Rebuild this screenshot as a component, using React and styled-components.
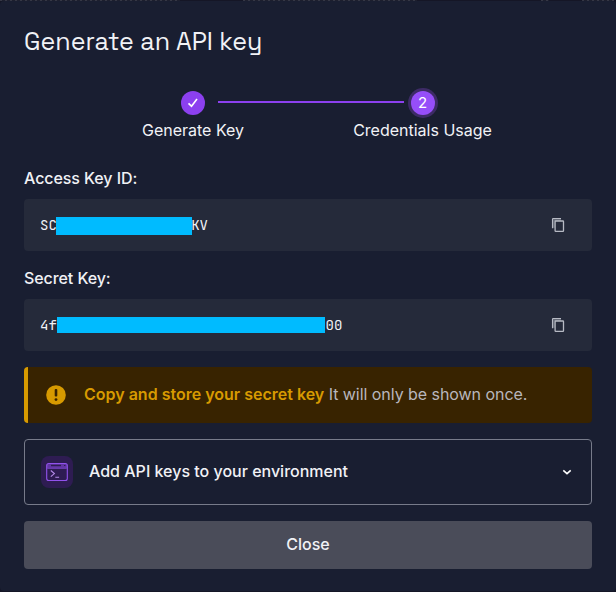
import React from "react";
import styled, { createGlobalStyle } from "styled-components";

const Global = createGlobalStyle`
  * { box-sizing: border-box; }
  body { margin: 0; background: #151626; }
`;

const Backdrop = styled.div`
  height: 592px;
  background: #151626;
  overflow: hidden;
`;

const PageBehind = styled.div`
  display: flex;
  height: 1px;
`;

const Dashes = styled.span`
  width: ${(p) => p.$width}px;
  margin-left: ${(p) => p.$offset}px;
  background: repeating-linear-gradient(90deg, #353745 0 2px, #1d1f2e 2px 5px);
`;

const Modal = styled.main`
  height: 590px;
  padding: 23px 24px 0;
  border-radius: 4px;
  background: #191e31;
  color: #f1f2f6;
  font: 400 16px/24px Inter, sans-serif;
`;

const Title = styled.h1`
  margin: 0;
  padding-top: 1px;
  height: 32px;
  font: 400 25px/32px "Space Grotesk", Inter, sans-serif;
  white-space: nowrap;
`;

const Stepper = styled.div`
  display: flex;
  justify-content: center;
  margin-top: 32px;
  padding-left: 18px;
  height: 56px;
`;

const Step = styled.div`
  display: flex;
  flex-direction: column;
  align-items: center;
  gap: 3px;
  width: ${(p) => p.$width}px;
  white-space: nowrap;
`;

const StepCircle = styled.div`
  display: grid;
  place-items: center;
  width: 24px;
  height: 24px;
  margin-top: 3px;
  border-radius: 50%;
  background: ${(p) => (p.$active ? "#964ef9" : "#8c40ef")};
  box-shadow: ${(p) => (p.$active ? "0 0 0 3px #3d2b66" : "none")};
  color: #fff;
  font-size: 15px;
  line-height: 24px;
`;

const StepLine = styled.div`
  width: 186px;
  height: 2px;
  margin: 13px -51px 0 -26px;
  background: #8c40ef;
`;

const Label = styled.h2`
  margin: ${(p) => p.$top}px 0 9px;
  font-size: 16px;
  font-weight: 500;
  line-height: 24px;
  letter-spacing: -0.08px;
`;

const KeyField = styled.div`
  display: flex;
  align-items: center;
  justify-content: space-between;
  height: 52px;
  padding: 0 26px 0 16px;
  border-radius: 4px;
  background: #252a3a;
`;

const KeyValue = styled.div`
  display: flex;
  align-items: center;
  font: 400 14px/20px "JetBrains Mono", "Liberation Mono", monospace;
`;

const Redaction = styled.span`
  width: ${(p) => p.$width}px;
  height: ${(p) => p.$height}px;
  margin: ${(p) => p.$margin};
  background: #00bbff;
`;

const Alert = styled.section`
  display: flex;
  align-items: center;
  gap: 18px;
  height: 56px;
  margin-top: 16px;
  padding-left: 18px;
  border-left: 4px solid #d79a00;
  border-radius: 4px;
  background: #382300;
  color: #b8b7bd;
  white-space: nowrap;
`;

const AlertText = styled.p`
  margin: 0;
  padding-bottom: 2px;
  letter-spacing: -0.05px;
`;

const Strong = styled.strong`
  color: #d79a00;
  font-weight: 600;
  letter-spacing: 0;
`;

const Expander = styled.section`
  display: flex;
  align-items: center;
  gap: 16px;
  height: 66px;
  margin-top: 16px;
  padding: 0 16px;
  border: 1px solid #777b8a;
  border-radius: 4px;
  font-weight: 500;
`;

const IconTile = styled.div`
  display: grid;
  place-items: center;
  width: 32px;
  height: 32px;
  border-radius: 8px;
  background: #2e1c52;
`;

const ExpanderTitle = styled.span`
  flex: 1;
  padding-bottom: 2px;
`;

const CloseButton = styled.button`
  display: block;
  width: 100%;
  height: 48px;
  margin-top: 16px;
  padding: 0 0 2px;
  border: 0;
  border-radius: 4px;
  background: #4a4c59;
  color: #f1f2f6;
  font: 500 16px/24px Inter, sans-serif;
`;

const CopyIcon = () => (
  <svg width="16" height="16" viewBox="0 0 16 16" fill="none" stroke="#b7bac4" strokeWidth="1.3">
    <path d="M2.6 11.2V2.2q0-.6.6-.6H11" />
    <path d="M3.2 2.2h7.8v1.5H4.6v7H3.2Z" fill="#6f7480" stroke="none" />
    <rect x="5.1" y="4" width="8.4" height="10.4" rx=".6" />
  </svg>
);

const CheckIcon = () => (
  <svg width="12" height="12" viewBox="0 0 12 12" fill="none" stroke="#fff" strokeWidth="1.6">
    <path d="M1.5 6.4 4.5 9.2 10 2" />
  </svg>
);

const AlertIcon = () => (
  <svg width="20" height="20" viewBox="0 0 20 20">
    <circle cx="10" cy="10" r="9.8" fill="#d79a00" />
    <rect x="8.7" y="4" width="2.6" height="7.6" rx="1" fill="#382300" />
    <circle cx="10" cy="14.6" r="1.4" fill="#382300" />
  </svg>
);

const TerminalIcon = () => (
  <svg width="22" height="20" viewBox="0 0 22 20" fill="none">
    <path d="M2.8 1.5h16.4a2 2 0 0 1 2 2V6H.8V3.5a2 2 0 0 1 2-2Z" fill="#6236a4" />
    <path d="M5 3.5h10" stroke="#2e1c52" strokeWidth="1.4" />
    <path d="M18 3.5h1.4" stroke="#2e1c52" strokeWidth="1.2" />
    <rect x=".7" y="1.5" width="20.6" height="17" rx="2" stroke="#9252ed" strokeWidth="1.1" />
    <path d="M1.2 6.3h19.6" stroke="#7943c4" />
    <path d="m4.8 8.5 3.6 3.1-3.6 3.1M9.3 15.3h3.8" stroke="#b58be9" strokeWidth="1.1" />
  </svg>
);

const ChevronIcon = () => (
  <svg width="16" height="16" viewBox="0 0 16 16" fill="none" stroke="#fff" strokeWidth="1.6">
    <path d="m4.3 6.4 3.7 3.3 3.7-3.3" />
  </svg>
);

export default function App() {
  return (
    <Backdrop>
      <Global />
      <PageBehind>
        <Dashes $offset={0} $width={180} />
        <Dashes $offset={63} $width={174} />
        <Dashes $offset={124} $width={8} />
        <Dashes $offset={33} $width={32} />
      </PageBehind>
      <Modal>
        <Title>Generate an API key</Title>
        <Stepper>
          <Step $width={102}><StepCircle><CheckIcon /></StepCircle>Generate Key</Step>
          <StepLine />
          <Step $width={139}><StepCircle $active>2</StepCircle>Credentials Usage</Step>
        </Stepper>
        <Label $top={22}>Access Key ID:</Label>
        <KeyField>
          <KeyValue>SC<Redaction $width={136} $height={18} $margin="2px -0.8px 0 -0.8px" />KV</KeyValue>
          <CopyIcon />
        </KeyField>
        <Label $top={15}>Secret Key:</Label>
        <KeyField>
          <KeyValue>4f<Redaction $width={268} $height={16} $margin="0 0.6px 0 0.2px" />00</KeyValue>
          <CopyIcon />
        </KeyField>
        <Alert>
          <AlertIcon />
          <AlertText><Strong>Copy and store your secret key</Strong> It will only be shown once.</AlertText>
        </Alert>
        <Expander>
          <IconTile><TerminalIcon /></IconTile>
          <ExpanderTitle>Add API keys to your environment</ExpanderTitle>
          <ChevronIcon />
        </Expander>
        <CloseButton>Close</CloseButton>
      </Modal>
    </Backdrop>
  );
}
